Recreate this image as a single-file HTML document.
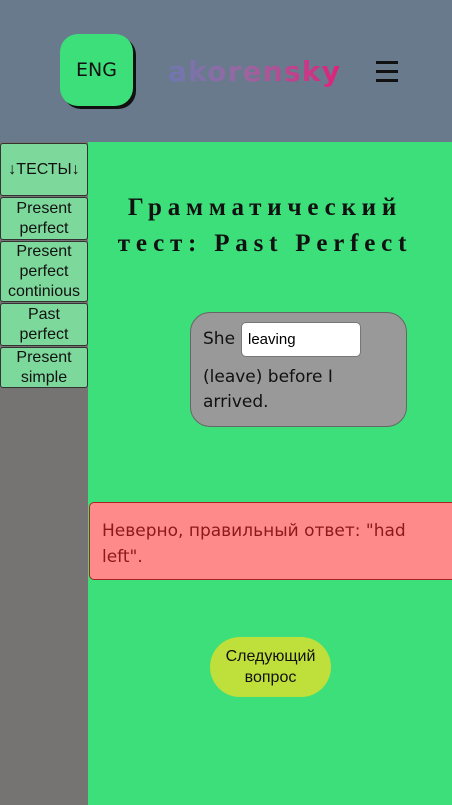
<!DOCTYPE html>
<html><head><meta charset="utf-8"><style>
*{margin:0;padding:0;box-sizing:border-box}
body{width:452px;height:805px;overflow:hidden;position:relative;background:#3ddf7a;font-family:"Liberation Sans",sans-serif}
.a{position:absolute}
#hdr{left:0;top:0;width:452px;height:142px;background:#687a8c}
#eng{left:60px;top:34px;width:73px;height:72px;background:#3ddf7a;border-radius:18px;box-shadow:3px 3px 0 #111;font-size:19px;display:flex;align-items:center;justify-content:center;color:#111;font-family:"DejaVu Sans",sans-serif}
#logo{left:168px;top:55px;font-family:"DejaVu Sans",sans-serif;font-size:28px;font-weight:bold;letter-spacing:1.2px;background:linear-gradient(90deg,#7077b0,#9a66a0 45%,#e0207a);-webkit-background-clip:text;background-clip:text;color:transparent}
.hb{left:376px;width:22px;height:3px;background:#111}
#side{left:0;top:142px;width:88px;height:663px;background:#767472}
.b{position:absolute;left:0;width:88px;background:#7dd89b;border:1px solid #333;border-radius:3px;font-size:16px;text-align:center;line-height:20px;color:#111;display:flex;align-items:center;justify-content:center}
#title{left:95px;top:190px;width:340px;text-align:center;font-family:"Liberation Serif",serif;font-weight:bold;font-size:25px;letter-spacing:5.8px;line-height:36px;color:#111}
#q{left:190px;top:312px;width:217px;height:115px;background:#999;border:1px solid #666;border-radius:20px;font-family:"DejaVu Sans",sans-serif;font-size:17px;color:#111;padding:14px 12px;line-height:25px}
#inp{left:241px;top:322px;width:120px;height:35px;background:#fff;border:1px solid #777;border-radius:5px;font-size:15px;padding:8px 6px;color:#000}
#err{left:89px;top:502px;width:370px;height:78px;background:#ff8a8a;border:1px solid #a22;border-radius:5px;color:#8b1a1a;font-family:"DejaVu Sans",sans-serif;font-size:17px;line-height:26px;padding:15px 12px 0 12px}
#next{left:210px;top:637px;width:121px;height:60px;background:#bfdf3a;border-radius:30px;font-size:16px;line-height:21px;text-align:center;display:flex;align-items:center;justify-content:center;color:#111}
</style></head><body>
<div id="hdr" class="a"></div>
<div id="eng" class="a">ENG</div>
<div id="logo" class="a">akorensky</div>
<div class="a hb" style="top:61px"></div>
<div class="a hb" style="top:70px"></div>
<div class="a hb" style="top:79px"></div>
<div id="side" class="a"></div>
<div class="b" style="top:143px;height:53px">↓ТЕСТЫ↓</div>
<div class="b" style="top:197px;height:43px">Present<br>perfect</div>
<div class="b" style="top:241px;height:61px">Present<br>perfect<br>continious</div>
<div class="b" style="top:303px;height:43px">Past<br>perfect</div>
<div class="b" style="top:347px;height:41px">Present<br>simple</div>
<div id="title" class="a">Грамматический тест: Past Perfect</div>
<div id="q" class="a">She<br><div style="margin-top:13px">(leave) before I<br>arrived.</div></div>
<div id="inp" class="a">leaving</div>
<div id="err" class="a">Неверно, правильный ответ: "had<br>left".</div>
<div id="next" class="a">Следующий<br>вопрос</div>
</body></html>
